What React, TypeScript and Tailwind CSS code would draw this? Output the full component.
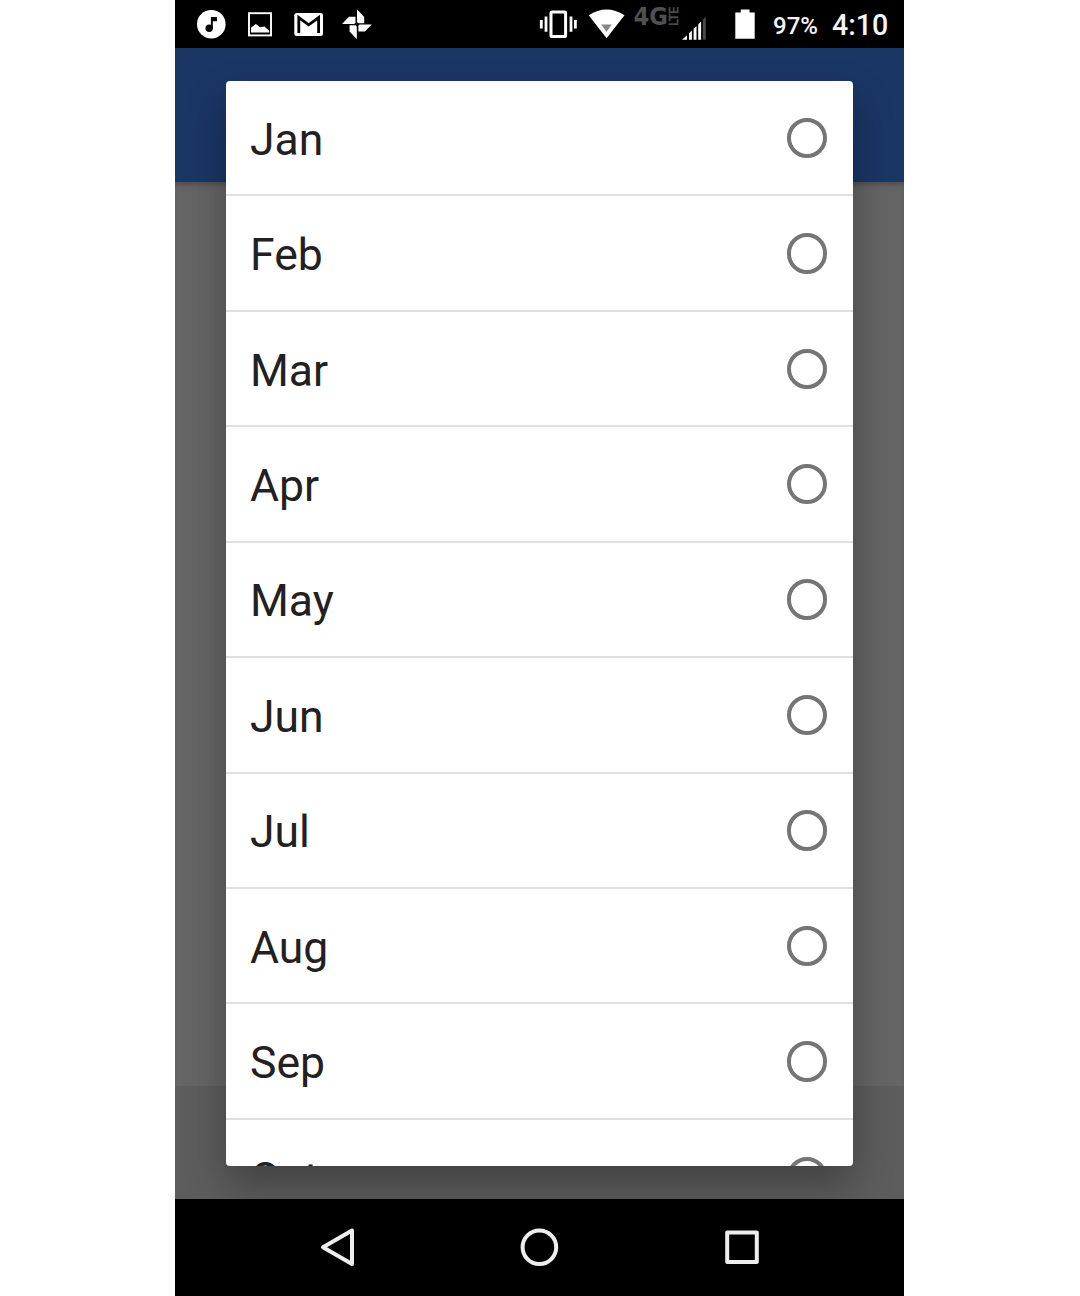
const MONTHS = ['Jan', 'Feb', 'Mar', 'Apr', 'May', 'Jun', 'Jul', 'Aug', 'Sep', 'Oct'];

function MusicIcon() {
  return (
    <svg className="ml-[21px] size-[30px] shrink-0" viewBox="196 9 30 30">
      <circle cx="211.3" cy="24.2" r="14.3" fill="#fff" />
      <circle cx="209.2" cy="28.2" r="3.7" fill="#000" />
      <path d="M210.9 28.2V17h6.1v4.2h-4.2v7z" fill="#000" />
    </svg>
  );
}

function PictureIcon() {
  return (
    <svg className="ml-[21px] h-[26px] w-[26px] shrink-0" viewBox="247 11 26 26">
      <rect x="249" y="13.2" width="22" height="22.2" fill="none" stroke="#fff" strokeWidth="1.9" />
      <path d="M251 32.6v-4.8l4.8-3.8 4.2 3.2 4.4-.6 4.8 4.2v1.8z" fill="#fff" />
    </svg>
  );
}

function GmailIcon() {
  return (
    <svg className="ml-[21px] h-[26px] w-[30px] shrink-0" viewBox="294 11 30 26">
      <rect x="294.3" y="13" width="28.7" height="23" rx="2.2" fill="#fff" />
      <path d="M298.8 33V17.6l9.9 7.2 9.9-7.2V33" fill="none" stroke="#000" strokeWidth="2.8" />
    </svg>
  );
}

function PhotosIcon() {
  return (
    <svg className="ml-[18px] h-[32px] w-[32px] shrink-0" viewBox="342 8 32 32" fill="#fff">
      <path d="M357 9.3l7.2 7.6v6.3h-5.8l-1.4-1.2z" />
      <path d="M371.8 24.4l-7 7h-6.4v-5.6l1.2-1.4z" />
      <path d="M356.8 39.2l-7.2-7.6v-6.4h6l1.2 1.2z" />
      <path d="M342 24l7-7.2h6.5v5.8l-1.2 1.4z" />
    </svg>
  );
}

function VibrateIcon() {
  return (
    <svg className="h-[32px] w-[38px] shrink-0" viewBox="539 8 38 32">
      <rect x="551" y="12" width="14.6" height="24.5" rx="1" fill="none" stroke="#fff" strokeWidth="3" />
      <path d="M541.3 20v8.5M546 16.5v15.2M571 16.5v15.2M575.4 20v8.5" stroke="#fff" strokeWidth="2.8" />
    </svg>
  );
}

function WifiIcon() {
  return (
    <svg className="ml-[11px] h-[32px] w-[38px] shrink-0" viewBox="588 8 38 32">
      <path d="M588.7 15.2q17.9-11.6 35.8 0L606.6 38.2z" fill="#fff" />
      <path d="M601.2 24.6h10.6l-5.3 7.2z" fill="#858585" />
    </svg>
  );
}

function NetworkBadge() {
  return (
    <svg
      className="ml-[7px] h-[32px] w-[48px] shrink-0 overflow-visible font-['DejaVu_Sans'] font-bold"
      viewBox="633 0 48 32"
      fill="#505050"
    >
      <text x="633.5" y="25" fontSize="24" textLength="34.5" lengthAdjust="spacingAndGlyphs">
        4G
      </text>
      <text transform="translate(678.4 26) rotate(-90)" fontSize="12.5" fontWeight="400" textLength="19.5" lengthAdjust="spacingAndGlyphs" stroke="#505050" strokeWidth=".5">
        LTE
      </text>
    </svg>
  );
}

function SignalIcon() {
  return (
    <svg className="ml-px h-[27px] w-[26px] shrink-0" viewBox="682 14 26 27">
      <path d="M682 39.8l5-4.6v4.6zM689 33.2l2.9-2.8v9.4H689zM693.6 28.8l2.9-2.8v13.8h-2.9zM698.2 24.4l2.9-2.8v18.2h-2.9z" fill="#fff" />
      <path d="M702.8 19.8l3-3v23h-3z" fill="#4a4a4a" />
    </svg>
  );
}

function BatteryIcon() {
  return (
    <svg className="ml-[27px] h-[32px] w-[20px] shrink-0" viewBox="735 8 20 32">
      <path d="M735.3 12.5h5.4v-3h8.8v3h5.2v26.3h-19.4z" fill="#fff" />
    </svg>
  );
}

function StatusBar() {
  return (
    <header className="flex h-[48px] shrink-0 bg-black text-[#f5f5f5]">
      <div className="flex flex-1 items-center">
        <MusicIcon />
        <PictureIcon />
        <GmailIcon />
        <PhotosIcon />
      </div>
      <div className="flex items-center">
        <VibrateIcon />
        <WifiIcon />
        <div className="flex self-start">
          <NetworkBadge />
        </div>
        <div className="mt-[7px] flex">
          <SignalIcon />
        </div>
        <BatteryIcon />
        <span className="ml-[18px] w-[59px] whitespace-nowrap pt-[3px] text-[24px] leading-none font-medium">97%</span>
        <span className="w-[72px] whitespace-nowrap pt-[3px] text-[28.6px] leading-none font-medium">4:10</span>
      </div>
    </header>
  );
}

function MonthDialog() {
  return (
    <div
      role="dialog"
      className="absolute top-[81px] left-[50.5px] h-[1085px] w-[627.5px] overflow-hidden rounded-[4px] bg-white"
    >
      {MONTHS.map((month) => (
        <div
          key={month}
          className="flex h-[115.43px] items-center justify-between border-b-2 border-[#e0e0e0] pr-[26px] pl-[24.5px]"
        >
          <span className="pt-[4px] text-[44.5px] leading-[46px] text-[#212121]">{month}</span>
          <span className="mt-[0.5px] size-[40.5px] rounded-full border-4 border-[#757575]" />
        </div>
      ))}
    </div>
  );
}

function NavBar() {
  return (
    <nav className="relative flex h-[97px] shrink-0 items-center bg-black pb-px">
      <svg className="ml-[144px] size-[40px]" viewBox="319 1227 40 40">
        <path d="M352 1230.5v33.5l-29-16.8z" fill="none" stroke="#eee" strokeWidth="4" strokeLinejoin="round" />
      </svg>
      <svg className="ml-[160px] size-[40px]" viewBox="519 1227 40 40">
        <circle cx="539.4" cy="1247.3" r="16.8" fill="none" stroke="#eee" strokeWidth="4" />
      </svg>
      <svg className="ml-[163px] size-[40px]" viewBox="722 1227 40 40">
        <rect x="727.2" y="1232.5" width="29.6" height="29.6" fill="none" stroke="#eee" strokeWidth="4" strokeLinejoin="round" />
      </svg>
    </nav>
  );
}

export default function App() {
  return (
    <div className="flex h-[1296px] w-[1080px] justify-center overflow-hidden bg-white pr-px font-[Roboto,sans-serif]">
      <div className="relative flex w-[729px] flex-col overflow-hidden">
        <StatusBar />
        <div className="h-[134px] shrink-0 bg-[#1a3665]" />
        <main className="flex-1 bg-[#656565] shadow-[inset_0_5px_4px_-2px_#505050]" />
        <div className="h-[113px] shrink-0 bg-[#5d5d5d]" />
        <div className="absolute top-[48px] left-0 h-[1151px] w-full overflow-hidden">
          <div className="absolute top-[33px] left-[50.5px] h-[1085px] w-[627.5px] rounded-[4px] shadow-[0_20px_40px_0_rgba(0,0,0,0.3)]" />
        </div>
        <MonthDialog />
        <NavBar />
      </div>
    </div>
  );
}
